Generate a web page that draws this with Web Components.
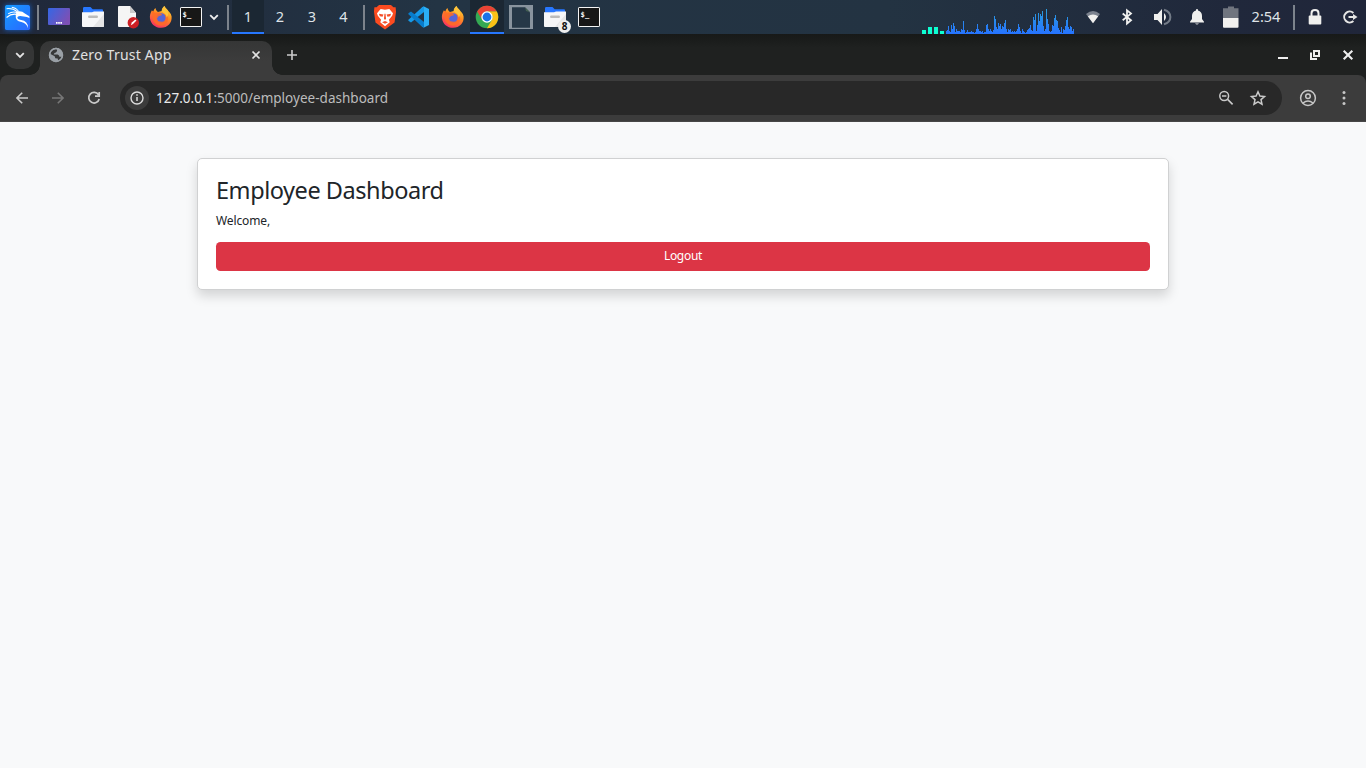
<!DOCTYPE html>
<html lang="en">
<head>
<meta charset="utf-8">
<title>Zero Trust App</title>
<style>
html,body{margin:0;height:100%;overflow:hidden}
body{font-family:"Noto Sans",sans-serif;background:#f8f9fa}
</style>
</head>
<body>
<desktop-shell>
  <desktop-panel slot="panel"></desktop-panel>
  <browser-window slot="window" heading="Zero Trust App" host="127.0.0.1" path=":5000/employee-dashboard">
    <dashboard-card>
      <span slot="title">Employee Dashboard</span>
      <span slot="message">Welcome,</span>
      <span slot="action">Logout</span>
    </dashboard-card>
  </browser-window>
</desktop-shell>
<script>
const define = (name, html, setup) => customElements.define(name, class extends HTMLElement {
  constructor() {
    super();
    const t = document.createElement('template');
    t.innerHTML = html;
    this.attachShadow({mode: 'open'}).append(t.content.cloneNode(true));
  }
  connectedCallback() { if (setup) setup(this, this.shadowRoot); }
});

const terminal = `<rect x="1.5" y="2.5" width="21" height="19" rx=".6" fill="#171717" stroke="#f4f4f4"/><text x="3.6" y="11.8" fill="#fff" font-family="DejaVu Sans Mono,monospace" font-weight="bold" font-size="7.2">$_</text>`;
const folder = `<path d="M2 3.2q0-1.2 1.2-1.2h6.3l2.2 2.3H21q1 0 1 1V10H2z" fill="#2777ff"/><path d="M1 7.2h10l2-.7h10V21q0 1-1 1H2q-1 0-1-1z" fill="#f6f6f7"/><path d="M23 9v12q0 1-1 1H12z" fill="#e5e5e6"/><rect x="7" y="10.5" width="10" height="2.5" rx="1.2" fill="#bbb"/>`;
const firefox = `<defs><linearGradient id="f" x1=".8" y1="0" x2=".3" y2="1"><stop stop-color="#ffe03c"/><stop offset=".45" stop-color="#ff8b22"/><stop offset="1" stop-color="#f92e64"/></linearGradient></defs><path d="M22.6 11.5C22 8 20 6.7 18.8 5.2 17 3.3 16 2.6 15.4 1c-2 1.6-2.7 3.2-2.8 5L9 7.1C7.6 5.8 6.7 4.6 6.5 3 5.4 4 4.7 5 4.4 6.4L2.8 5.6C1 9 .7 11.2 1 13.5 1.8 19.1 6.3 22.8 12 22.8c6.8 0 11.2-5.1 10.6-11.3z" fill="url(#f)"/><circle cx="12.1" cy="13" r="4.8" fill="#5865d8"/><path d="M2.8 5.6L6 7.8l4.2-.6q1.8 1 3 2.7l-3.6 1.3q-.8 1.3-1.6 2.2.2 2.5 3 3.2c4.1.7 5.6-1.3 5.6-3.9 0-3-1.9-4.5-3.7-5.2 3.4-.2 6.2 2.6 6.2 6 0 4.2-3 7.2-7.1 7.2-4.7 0-7.7-3.2-8.3-7.2C3.3 10.5 3.1 8.3 2.8 5.6z" fill="#ff6b26" opacity=".85"/><path d="M15.4 1c-2 1.7-3 4.2-1.8 6.2 1.7 1 4 2.8 4.1 5.4 2-2.4 1.7-5.2.6-7.9C17 3.4 16 2.6 15.4 1z" fill="#ffc33a"/>`;

const icons = {
kali: `<defs><linearGradient id="k" x2="1" y2="1"><stop stop-color="#149cff"/><stop offset="1" stop-color="#2b66ff"/></linearGradient></defs><rect width="24" height="24" rx="1.5" fill="url(#k)"/><path d="M1.5 3.5q6-.7 10.5 3M3 8.5q4.5-3 9-1M6.5 2.2q4 .4 6.6 4M1.5 12q4.7-4.1 10-3" fill="none" stroke="#fff" stroke-width="1"/><path d="M11.5 6.2q5-.9 7.2 1.8l4.6 2.9.2 1.6-2.6-.9-3-.6q-4.4-1.2-5.9.6-.7 2.2 3.4 2.9 6.6.8 6.8 7.8-1.8-5.3-6.5-6-5.9-1-5.4-5.4 0-3 1.2-4.7z" fill="#fff"/>`,
desktop: `<defs><linearGradient id="d" x2="1" y2=".5"><stop stop-color="#3467e5"/><stop offset="1" stop-color="#7c50b5"/></linearGradient></defs><rect x="1" y="3" width="22" height="17" rx="1" fill="url(#d)"/><path d="M9 17.8h6" stroke="#fff" stroke-width="1.7" stroke-dasharray="1.6 .6"/>`,
folder, terminal, firefox,
doc: `<path d="M4 1h11l6 7v14H4q-1 0-1-1V2q0-1 1-1z" fill="#f5f5f5"/><path d="M15 1v7h6z" fill="#c9c9c9"/><circle cx="18.3" cy="17.7" r="5.7" fill="#cd1f24"/><path d="M15.8 20.2l1-2.6 3.5-3.2 1.2 1.2-3.5 3.5z" fill="#fff"/>`,
chevron: `<path d="M8.2 10.2l3.8 3.8 3.8-3.8" fill="none" stroke="#eee" stroke-width="1.8"/>`,
brave: `<path d="M6.5 1h11l2.3 2.1 2-.1.4 4.1-1.4 10L12 23.5 3.2 17 1.8 7 2.2 3l2 .1z" fill="#fb4b20"/><path d="M8 4.6l4 .7 4-.7 3.4 4-.8 2.2-3 3.7.8 2.4-4.4 3.7-4.4-3.7.8-2.4-3-3.7-.8-2.2z" fill="#fff"/><path d="M6.4 9l4.2.8-.9 1.9-2.5-.5zM17.6 9l-4.2.8.9 1.9 2.5-.5zM11.5 9h1l.5 4.8-1 .7-1-.7zM9.3 16.8l2.7-1.2 2.7 1.2-2.7 1.4z" fill="#f4512c"/>`,
vscode: `<path d="M17 1.4L22 4v16l-5 2.6-1.5-.7L6 12l9.5-9.9z" fill="#2aaef5"/><path d="M17 1.4v5.7L4 17.4 1.4 15.8v-1L15.5 1.9z" fill="#1699e8"/><path d="M1.4 8.3L4 6.5l13 10.3v5.8l-1.5-.7L1.4 9.2z" fill="#087ccb"/><path d="M17 7v10l-6.4-5z" fill="#223344"/>`,
chrome: `<circle cx="12" cy="12" r="11.3" fill="#34a853"/><path d="M2.2 6.4A11.3 11.3 0 0121.8 6.4H12A5.6 5.6 0 007.1 14.8z" fill="#ea4335"/><path d="M21.8 6.4A11.3 11.3 0 0112 23.3l4.9-8.5A5.6 5.6 0 0012 6.4z" fill="#fbc116"/><circle cx="12" cy="12" r="5.7" fill="#fff"/><circle cx="12" cy="12" r="4.4" fill="#1a73e8"/>`,
blank: `<path d="M0 0h24v24H0z" fill="#89949e"/><path d="M3 2.3h13l5 5v15.5H3z" fill="#263847"/><path d="M16 2.3l5 5-4-1.2z" fill="#436052"/>`,
wifi: `<path d="M5 9q7-5.8 14 0l-7 9z" fill="#7b828e"/><path d="M6.8 11.2q5.2-3.5 10.4 0L12 18.2z" fill="#f0f0ee"/>`,
bluetooth: `<path d="M7.7 8.5l8.3 6.7-4 3.3V5.3l4 3.3-8.3 6.7" fill="none" stroke="#f0f0ee" stroke-width="1.8"/>`,
volume: `<path d="M4 9h3.5L12 4v16l-4.5-5H4z" fill="#f0f0ee"/><path d="M14 8q4 4 0 8z" fill="#f0f0ee"/><path d="M14 4.7c8.5 2.5 8.5 12.1 0 14.6" fill="none" stroke="#737b87" stroke-width="2"/>`,
bell: `<path d="M11 4.3h2v1.1q4 1 4 5.6v3l2 2.8v.7H5v-.7L7 14v-3q0-4.6 4-5.6zM10 18.5h4q-2 2-4 0z" fill="#f0f0ee"/>`,
battery: `<path d="M4 3.2h5V1.5h6v1.7h4.5V13H4z" fill="#70757f"/><path d="M4 13h15.5v8.7q0 1-1 1H5q-1 0-1-1z" fill="#f2f1ef"/>`,
lock: `<path d="M8.5 11V8.2q0-3.2 3.5-3.2t3.5 3.2V11" fill="none" stroke="#f0f0ee" stroke-width="2"/><rect x="5.7" y="10.5" width="12.6" height="9" rx="1" fill="#f0f0ee"/>`,
logout: `<path d="M15.4 7.9A5.5 5.5 0 1015.4 16.1" fill="none" stroke="#e6e6e5" stroke-width="2"/><path d="M10.5 12h5.5" stroke="#e6e6e5" stroke-width="2"/><path d="M15 9l4.5 3-4.5 3z" fill="#e6e6e5"/>`,
down: `<path d="M8.2 10.2l3.8 3.8 3.8-3.8" fill="none" stroke="#e3e3e3" stroke-width="1.8"/>`,
globe: `<circle cx="12" cy="12" r="7.2" fill="#9aa0a6"/><path d="M12.3 6.1q1.8 1.5-.4 3.5-1.7.1-2.2 1.8h4q1.8.7 1.7 2.3h2.5q-.7 2.7-3.7 4l-.5-2.3-2.4-.2-.6-2-4.2-2.1q.4-4.3 5.8-5z" fill="#373838"/><circle cx="12" cy="12" r="6.5" fill="none" stroke="#9aa0a6" stroke-width="1.4"/>`,
close: `<path d="M8.5 8.5l7 7m0-7l-7 7" stroke="#e3e3e3" stroke-width="1.7"/>`,
plus: `<path d="M12 7v10M7 12h10" stroke="#cbcbcb" stroke-width="1.6"/>`,
min: `<path d="M7 15h10" stroke="#eee" stroke-width="2"/>`,
restore: `<path d="M11 8h5v5h-5zM8 9.5V16h6" fill="none" stroke="#eee" stroke-width="2"/>`,
winclose: `<path d="M7.7 7.7l8.6 8.6m0-8.6l-8.6 8.6" stroke="#eee" stroke-width="2.1"/>`,
back: `<path d="M18 12H7m5.2-5.3L6.9 12l5.3 5.3" fill="none" stroke="#cacaca" stroke-width="1.6"/>`,
forward: `<path d="M6 12h11m-5.2-5.3l5.3 5.3-5.3 5.3" fill="none" stroke="#777" stroke-width="1.6"/>`,
reload: `<path d="M16.5 8.8A5.3 5.3 0 1017.2 13M17.2 6v4.2H13" fill="none" stroke="#cacaca" stroke-width="1.7"/>`,
info: `<circle cx="12" cy="12" r="6" fill="none" stroke="#ddd" stroke-width="1.4"/><path d="M12 11v4M12 8.3v1.5" stroke="#ddd" stroke-width="1.5"/>`,
zoomout: `<circle cx="10.2" cy="10" r="4.4" fill="none" stroke="#c9c9c9" stroke-width="1.5"/><path d="M13.6 13.4L18.6 18.4M8 10h4.4" stroke="#c9c9c9" stroke-width="1.6"/>`,
star: `<path d="M12 5.8l1.9 4.3 4.6.4-3.5 3.1 1 4.6-4-2.4-4 2.4 1-4.6-3.5-3.1 4.6-.4z" fill="none" stroke="#cacaca" stroke-width="1.5"/>`,
user: `<circle cx="12" cy="12" r="7.4" fill="none" stroke="#c7c7c7" stroke-width="1.5"/><circle cx="12" cy="10.3" r="2.3" fill="none" stroke="#c7c7c7" stroke-width="1.5"/><path d="M7 17q5-4 10 0" fill="none" stroke="#c7c7c7" stroke-width="1.5"/>`,
menu: `<g fill="#c7c7c7"><circle cx="12" cy="6.5" r="1.5"/><circle cx="12" cy="12" r="1.5"/><circle cx="12" cy="17.5" r="1.5"/></g>`
};

define('ui-icon', `<style>:host{display:block;flex:none;width:24px;height:24px}svg{display:block;width:100%;height:100%;overflow:visible}</style><svg viewBox="0 0 24 24"></svg>`, (el, root) => {
  root.querySelector('svg').innerHTML = icons[el.getAttribute('name')];
});

define('cpu-graph', `<style>:host{display:block;width:153px;height:34px}svg{display:block}</style><svg width="153" height="34" shape-rendering="crispEdges"><defs><linearGradient id="g" gradientUnits="userSpaceOnUse" x1="0" y1="8" x2="0" y2="34"><stop stop-color="#2aa0dc"/><stop offset="1" stop-color="#2673ff"/></linearGradient></defs></svg>`, (el, root) => {
  const heights = [3,4,8,3,2,9,5,11,8,2,5,3,3,3,2,5,4,13,4,1,2,4,2,2,2,3,2,2,1,2,5,10,5,3,3,2,3,1,2,2,9,10,5,3,5,3,2,4,18,15,7,5,11,8,10,5,8,7,11,14,5,2,5,4,5,2,3,2,3,2,3,5,10,7,3,1,5,3,2,1,2,4,5,6,9,4,3,17,14,20,3,9,21,13,20,18,23,8,3,5,25,15,10,3,2,3,9,8,16,19,14,13,6,4,2,7,1,5,4,8,14,17,7,5,8,7,3,5];
  const bars = heights.map((h, i) => `M${25 + i} 34v-${h}h1v${h}z`).join('');
  root.querySelector('svg').insertAdjacentHTML('beforeend', `<path d="${bars}" fill="url(#g)"/><path d="M1 30h4v4H1zM7 27h4v7H7zM13 27h4v7h-4zM19 31h4v3h-4z" fill="#0dffd1"/>`);
});

define('desktop-panel', `<style>
:host{display:flex;align-items:center;width:1366px;height:34px;background:linear-gradient(90deg,#20283a 0,#233444 32%,#233342 65%,#20283b 90%,#20263a);color:#dfe3e7;font-size:14.5px}
.slot{width:34px;height:34px;display:grid;place-items:center;position:relative;box-sizing:border-box;flex:none}
.kali ui-icon{width:25px;height:25px;box-shadow:0 0 5px #1661c9}
.sep{width:2px;height:25px;background:#7c838c;flex:none}
.ws{width:32px;height:34px;display:block;text-align:center;box-sizing:border-box;line-height:32px}
.on{background:#1b2733;box-shadow:inset 0 -2px #2777ff}
.badge{position:absolute;right:1px;bottom:1px;width:13px;height:13px;border-radius:50%;background:#efefef;color:#111;font:bold 10px/13px "Noto Sans",sans-serif;text-align:center}
cpu-graph{margin-left:auto}.time{width:38px;height:34px;text-align:center;line-height:32px;white-space:nowrap}
</style>
<div class="slot kali"><ui-icon name="kali"></ui-icon></div><i class="sep" style="margin:0 3px"></i>
<div class="slot"><ui-icon name="desktop"></ui-icon></div><div class="slot"><ui-icon name="folder"></ui-icon></div><div class="slot"><ui-icon name="doc"></ui-icon></div><div class="slot"><ui-icon name="firefox"></ui-icon></div>
<div class="slot" style="width:26px"><ui-icon name="terminal"></ui-icon></div><div class="slot" style="width:24px;margin:0 -2px"><ui-icon name="chevron"></ui-icon></div><i class="sep" style="margin:0 3px"></i>
<div class="ws on">1</div><div class="ws">2</div><div class="ws">3</div><div class="ws" style="padding-right:1px">4</div><i class="sep" style="margin:0 3px"></i>
<div class="slot"><ui-icon name="brave" style="width:26px;height:26px"></ui-icon></div><div class="slot"><ui-icon name="vscode"></ui-icon></div><div class="slot"><ui-icon name="firefox"></ui-icon></div><div class="slot on"><ui-icon name="chrome"></ui-icon></div><div class="slot"><ui-icon name="blank"></ui-icon></div><div class="slot"><ui-icon name="folder"></ui-icon><span class="badge">8</span></div><div class="slot"><ui-icon name="terminal"></ui-icon></div>
<cpu-graph></cpu-graph><div class="slot" style="margin-left:2px"><ui-icon name="wifi"></ui-icon></div><div class="slot"><ui-icon name="bluetooth"></ui-icon></div><div class="slot" style="width:36px"><ui-icon name="volume"></ui-icon></div><div class="slot"><ui-icon name="bell"></ui-icon></div><div class="slot" style="width:33px"><ui-icon name="battery"></ui-icon></div><div class="time">2:54</div><i class="sep" style="margin:0 3px 0 8px"></i><div class="slot"><ui-icon name="lock"></ui-icon></div><div class="slot" style="width:35px;margin-right:-1px"><ui-icon name="logout"></ui-icon></div>`);

define('browser-window', `<style>
:host{display:flex;flex-direction:column;height:734px;color:#e1e1e1}
.tabs{height:41px;box-sizing:border-box;padding:7px 0 0 6px;display:flex;background:linear-gradient(#171918,#1f2120 14px)}
.drop{width:28px;height:28px;border-radius:10px;background:#353636;display:grid;place-items:center;flex:none}
.tab{position:relative;margin-left:6px;width:232px;height:34px;box-sizing:border-box;padding:0 4px;display:flex;align-items:center;background:linear-gradient(#353636,#3c3c3c 20px);border-radius:10px 10px 0 0}
.tab:before,.tab:after{content:"";position:absolute;bottom:0;width:10px;height:10px}
.tab:before{left:-10px;background:radial-gradient(circle at 0 0,transparent 9.5px,#3c3c3c 10px)}
.tab:after{right:-10px;background:radial-gradient(circle at 100% 0,transparent 9.5px,#3c3c3c 10px)}
.tab ui-icon,.tab span{margin-bottom:6px}.tab span{margin-left:4px;flex:1;font-size:14px;letter-spacing:.22px;line-height:20px;white-space:nowrap}
.plus{margin:2px 0 0 8px}.win{margin:2px 6px 0 auto;display:flex;gap:8px}
.bar{height:47px;box-sizing:border-box;padding:0 10px;display:flex;align-items:center;background:#3c3c3c;border-bottom:1px solid #474747;border-radius:8px 8px 0 0}
.top{background:#1f2120}
.nav{display:flex;gap:12px}.url{margin-left:14px;width:1162px;height:34px;border-radius:17px;background:#282828;display:flex;align-items:center;box-sizing:border-box;padding:0 12px 0 5px}
.info{width:24px;height:24px;border-radius:50%;background:#3c3c3c}.addr{margin-left:7px;font-size:13.5px;letter-spacing:.02px;line-height:20px;white-space:nowrap;color:#bcbcbc;flex:1}.addr b{font-weight:400;color:#e9e9e9}
.page{flex:1;background:#f8f9fa;display:flex;justify-content:center;align-items:flex-start;padding-top:36px;color:#212529}
</style>
<div class="tabs"><div class="drop"><ui-icon name="down"></ui-icon></div><div class="tab"><ui-icon name="globe"></ui-icon><span id="heading"></span><ui-icon name="close"></ui-icon></div><ui-icon class="plus" name="plus"></ui-icon><div class="win"><ui-icon name="min"></ui-icon><ui-icon name="restore" style="margin-right:1px"></ui-icon><ui-icon name="winclose"></ui-icon></div></div>
<div class="top"><div class="bar"><div class="nav"><ui-icon name="back"></ui-icon><ui-icon name="forward"></ui-icon><ui-icon name="reload"></ui-icon></div><div class="url"><div class="info"><ui-icon name="info"></ui-icon></div><div class="addr"><b id="host"></b><span id="path"></span></div><ui-icon name="zoomout"></ui-icon><ui-icon name="star" style="margin-left:8px"></ui-icon></div><ui-icon name="user" style="margin-left:14px"></ui-icon><ui-icon name="menu" style="margin-left:12px"></ui-icon></div></div>
<div class="page"><slot></slot></div>`, (el, root) => {
  for (const key of ['heading', 'host', 'path']) root.getElementById(key).textContent = el.getAttribute(key);
});

define('dashboard-card', `<style>
:host{display:block;box-sizing:border-box;width:972px;height:132px;padding:18px;background:#fff;border:1px solid #d0d1d2;border-radius:5px;box-shadow:0 6px 12px rgba(0,0,0,.15)}
h1{margin:-1px 0 7px;font-size:23.5px;letter-spacing:-.45px;font-weight:400;line-height:29px;white-space:nowrap}
p{margin:0 0 12px;font-size:12px;letter-spacing:-.12px;line-height:18px}
button{display:block;width:100%;height:29px;border:0;border-radius:4.5px;padding:0 0 1px;background:#dc3545;color:#fff;font:12px/28px "Noto Sans",sans-serif;letter-spacing:-.3px}
</style><h1><slot name="title"></slot></h1><p><slot name="message"></slot></p><button><slot name="action"></slot></button>`);

define('desktop-shell', `<style>:host{display:flex;flex-direction:column;width:1366px;height:768px;overflow:hidden}</style><slot name="panel"></slot><slot name="window"></slot>`);
</script>
</body>
</html>
